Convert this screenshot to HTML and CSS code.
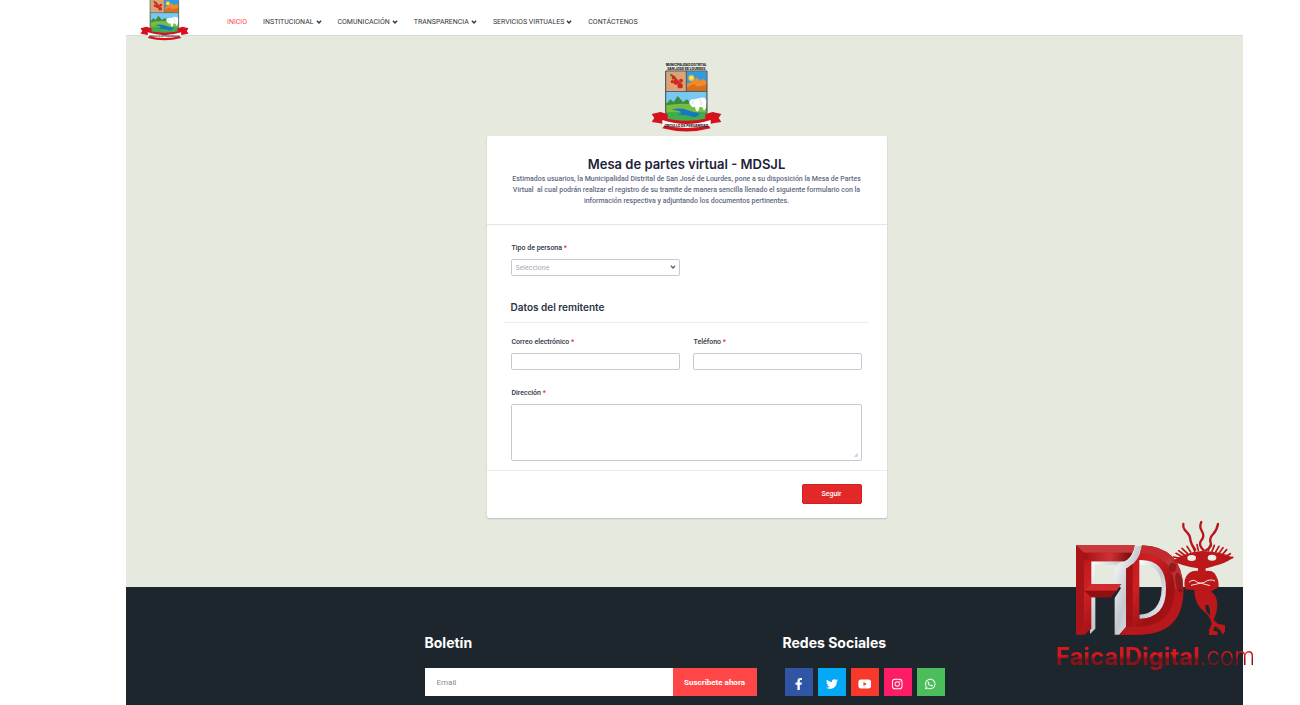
FILE: index.html
```html
<!DOCTYPE html>
<html lang="es">
<head>
<meta charset="utf-8">
<meta name="viewport" content="width=device-width, initial-scale=1">
<title>Mesa de partes virtual - MDSJL</title>
<link rel="stylesheet" href="styles.css">
</head>
<body>
<svg class="sprite" aria-hidden="true">
  <symbol id="caret" viewBox="0 0 10 10"><path d="M1.500 3L5 6.500 8.500 3" fill="none" stroke="currentColor" stroke-width="2.400"/></symbol>
</svg>

<div class="site">
  <header class="topbar">
    <a class="brand" href="#" aria-label="Inicio"><svg class="brand-crest" viewBox="0 0 213 210"><use href="#crest"/></svg></a>
    <nav class="menu">
      <a class="menu-link active" href="#">INICIO</a>
      <a class="menu-link" href="#">INSTITUCIONAL<svg class="caret"><use href="#caret"/></svg></a>
      <a class="menu-link" href="#">COMUNICACIÓN<svg class="caret"><use href="#caret"/></svg></a>
      <a class="menu-link" href="#">TRANSPARENCIA<svg class="caret"><use href="#caret"/></svg></a>
      <a class="menu-link" href="#">SERVICIOS VIRTUALES<svg class="caret"><use href="#caret"/></svg></a>
      <a class="menu-link" href="#">CONTÁCTENOS</a>
    </nav>
  </header>

  <main class="content">
    <svg class="crest" viewBox="0 0 213 210" role="img" aria-label="Municipalidad Distrital San José de Lourdes">
      <g id="crest">
        <path d="M43 27H169V150Q169 173 150 177L106 193L62 177Q43 173 43 150Z" fill="#fff"/>
        <path d="M45 28H105V86H45Z" fill="#dca474"/>
        <path d="M108 28H167V86H108Z" fill="#2f9be0"/>
        <path d="M108 66L124 58 138 46 148 56 158 50 167 60V86H108Z" fill="#f08a2c"/>
        <path d="M108 76L128 66 140 74 167 68V86H108Z" fill="#d96f1c"/>
        <circle cx="121" cy="48" r="9" fill="#ffc629"/>
        <circle cx="121" cy="48" r="4" fill="#fff0a0"/>
        <path d="M58 38Q70 42 94 76" stroke="#3c7b32" stroke-width="6" fill="none"/>
        <g fill="#d7261e"><circle cx="68" cy="47" r="6"/><circle cx="75" cy="60" r="8"/><circle cx="90" cy="56" r="6"/><circle cx="87" cy="71" r="8"/><circle cx="64" cy="59" r="5"/></g>
        <path d="M45 90H167V150Q167 170 150 175L106 190L62 175Q45 170 45 150Z" fill="#41ad49"/>
        <path d="M45 90H167V122H45Z" fill="#79c9ee"/>
        <path d="M45 128L58 112 68 120 80 102 96 120 108 112 124 128V140H45Z" fill="#3d8b3f"/>
        <path d="M45 130Q90 120 167 130V150H45Z" fill="#77bd43"/>
        <path d="M62 143Q88 136 106 143T146 154Q144 164 128 166Q112 157 78 158Q108 148 62 143Z" fill="#1976c5"/>
        <path d="M114 122Q118 109 131 112L150 107Q164 103 167 118L165 138 159 146 154 136 146 134 142 148 135 148 132 134Q124 138 120 131Z" fill="#fff"/>
        <path d="M131 113Q124 118 124 127M145 110Q152 117 151 130" stroke="#b9cdd3" stroke-width="2" fill="none"/>
        <path d="M44 27H168V150Q168 172 150 176L106 191L62 176Q44 172 44 150ZM106 27V88M44 88H168" fill="none" stroke="#3c4148" stroke-width="3"/>
        <path d="M2 156L28 150 50 156V182L28 184 2 180 10 168ZM211 156L185 150 163 156V182L185 184 211 180 203 168Z" fill="#d3121d"/>
        <path d="M28 164Q106 188 185 164V184L171 188 179 199Q106 218 34 199L42 188 28 184Z" fill="#d3121d"/>
        <path d="M34 174Q106 198 179 174V190Q106 206 34 190Z" fill="#fff"/>
        <g font-family="Inter, sans-serif" font-weight="800" text-anchor="middle" fill="#1b1b1b">
          <text x="106" y="13" font-size="9">MUNICIPALIDAD DISTRITAL</text>
          <text x="106" y="24" font-size="10">SAN JOSÉ DE LOURDES</text>
          <text x="106" y="196" font-size="10">ORGULLO DE PERUANIDAD</text>
        </g>
      </g>
    </svg>
    <form class="card">
      <div class="card-head">
        <h1 class="card-title">Mesa de partes virtual - MDSJL</h1>
        <p class="card-text">Estimados usuarios, la Municipalidad Distrital de San José de Lourdes, pone a su disposición la Mesa de Partes Virtual&nbsp; al cual podrán realizar el registro de su tramite de manera sencilla llenado el siguiente formulario con la información respectiva y adjuntando los documentos pertinentes.</p>
      </div>
      <div class="card-body">
        <div class="fields">
          <div class="field">
            <label class="label" for="tipo">Tipo de persona <span class="req">*</span></label>
            <div class="select-wrap">
              <select class="control select" id="tipo"><option>Seleccione</option></select>
              <svg class="select-caret"><use href="#caret"/></svg>
            </div>
          </div>
        </div>
        <h2 class="section-title">Datos del remitente</h2>
        <div class="fields">
          <div class="field">
            <label class="label" for="correo">Correo electrónico <span class="req">*</span></label>
            <input class="control" id="correo" type="email">
          </div>
          <div class="field">
            <label class="label" for="telefono">Teléfono <span class="req">*</span></label>
            <input class="control" id="telefono" type="tel">
          </div>
          <div class="field wide">
            <label class="label" for="direccion">Dirección <span class="req">*</span></label>
            <textarea class="control area" id="direccion"></textarea>
          </div>
        </div>
      </div>
      <div class="card-foot"><button class="submit" type="button">Seguir</button></div>
    </form>
  </main>

  <footer class="footer">
    <section class="newsletter">
      <h2 class="footer-title">Boletín</h2>
      <form class="subscribe">
        <input class="subscribe-input" type="email" placeholder="Email" aria-label="Email">
        <button class="subscribe-button" type="button">Suscribete ahora</button>
      </form>
    </section>
    <section>
      <h2 class="footer-title">Redes Sociales</h2>
      <div class="social">
        <a class="social-link facebook" href="#" aria-label="Facebook"><svg viewBox="0 0 320 512"><path d="M279.140 288l14.220-92.660h-88.910v-60.130c0-25.350 12.420-50.060 52.240-50.060h40.420V6.260S260.430 0 225.360 0c-73.220 0-121.080 44.380-121.080 124.720v70.620H22.890V288h81.390v224h100.170V288z"/></svg></a>
        <a class="social-link twitter" href="#" aria-label="Twitter"><svg viewBox="0 0 512 512"><path d="M459.370 151.716c.325 4.548.325 9.097.325 13.645 0 138.720-105.583 298.558-298.558 298.558-59.452 0-114.680-17.219-161.137-47.106 8.447.974 16.568 1.299 25.340 1.299 49.055 0 94.213-16.568 130.274-44.832-46.132-.975-84.792-31.188-98.112-72.772 6.498.974 12.995 1.624 19.818 1.624 9.421 0 18.843-1.300 27.614-3.573-48.081-9.747-84.143-51.980-84.143-102.985v-1.299c13.969 7.797 30.214 12.670 47.431 13.319-28.264-18.843-46.781-51.005-46.781-87.391 0-19.492 5.197-37.360 14.294-52.954 51.655 63.675 129.300 105.258 216.365 109.807-1.624-7.797-2.599-15.918-2.599-24.040 0-57.828 46.782-104.934 104.934-104.934 30.213 0 57.502 12.670 76.670 33.137 23.715-4.548 46.456-13.320 66.599-25.340-7.798 24.366-24.366 44.833-46.132 57.827 21.117-2.273 41.584-8.122 60.426-16.243-14.292 20.791-32.161 39.308-52.628 54.253z"/></svg></a>
        <a class="social-link youtube" href="#" aria-label="YouTube"><svg viewBox="0 0 576 512"><path d="M549.655 124.083c-6.281-23.650-24.787-42.276-48.284-48.597C458.781 64 288 64 288 64S117.220 64 74.629 75.486c-23.497 6.322-42.003 24.947-48.284 48.597-11.412 42.867-11.412 132.305-11.412 132.305s0 89.438 11.412 132.305c6.281 23.650 24.787 41.500 48.284 47.821C117.220 448 288 448 288 448s170.780 0 213.371-11.486c23.497-6.321 42.003-24.171 48.284-47.821 11.412-42.867 11.412-132.305 11.412-132.305s0-89.438-11.412-132.305zm-317.510 213.508V175.185l142.739 81.205-142.739 81.201z"/></svg></a>
        <a class="social-link instagram" href="#" aria-label="Instagram"><svg viewBox="0 0 448 512"><path d="M224 141c-63.600 0-115 51.300-115 115s51.400 115 115 115 115-51.300 115-115-51.400-115-115-115zm0 190c-41 0-75-33-75-75s34-75 75-75 75 34 75 75-34 75-75 75z"/><circle cx="343" cy="136" r="27"/><path fill-rule="evenodd" d="M132 32H316Q448 32 448 164V348Q448 480 316 480H132Q0 480 0 348V164Q0 32 132 32ZM132 73Q40 73 40 164V348Q40 439 132 439H316Q408 439 408 348V164Q408 73 316 73Z"/></svg></a>
        <a class="social-link whatsapp" href="#" aria-label="WhatsApp"><svg viewBox="0 0 448 512"><path d="M380.900 97.100C339 55.100 283.200 32 223.900 32c-122.400 0-222 99.600-222 222 0 39.100 10.200 77.300 29.600 111L0 480l117.700-30.900c32.400 17.700 68.900 27 106.100 27h.1c122.300 0 224.100-99.600 224.100-222 0-59.300-25.200-115-67.100-157zm-157 341.600c-33.200 0-65.700-8.900-94-25.700l-6.700-4-69.800 18.300L72 359.200l-4.400-7c-18.500-29.400-28.200-63.300-28.200-98.200 0-101.700 82.800-184.500 184.600-184.500 49.300 0 95.600 19.200 130.400 54.100 34.800 34.900 56.200 81.200 56.100 130.500 0 101.800-84.900 184.600-186.600 184.600zm101.200-138.200c-5.500-2.800-32.800-16.200-37.900-18-5.100-1.900-8.800-2.800-12.500 2.800-3.700 5.600-14.300 18-17.600 21.800-3.200 3.700-6.500 4.200-12 1.400-32.600-16.300-54-29.100-75.500-66-5.700-9.800 5.700-9.100 16.300-30.300 1.800-3.700.9-6.900-.5-9.700-1.400-2.800-12.500-30.100-17.100-41.200-4.500-10.800-9.100-9.300-12.500-9.500-3.200-.2-6.900-.2-10.600-.2-3.700 0-9.700 1.400-14.800 6.900-5.100 5.600-19.400 19-19.400 46.300 0 27.300 19.900 53.700 22.600 57.400 2.800 3.700 39.100 59.700 94.800 83.800 35.200 15.200 49 16.500 66.600 13.900 10.700-1.600 32.800-13.400 37.400-26.400 4.600-13 4.600-24.100 3.200-26.400-1.300-2.500-5-3.900-10.500-6.600z"/></svg></a>
      </div>
    </section>
  </footer>
</div>

<div class="watermark">
  <svg class="watermark-art" viewBox="18 30 591 375" aria-hidden="true">
    <defs>
      <linearGradient id="red" x1="0" y1="0" x2="1" y2="1"><stop offset="0" stop-color="#b3161a"/><stop offset=".35" stop-color="#cf2023"/><stop offset=".65" stop-color="#9c1013"/><stop offset="1" stop-color="#bd171b"/></linearGradient>
      <linearGradient id="bar" x1="0" y1="0" x2="1" y2="0"><stop offset="0" stop-color="#a31216"/><stop offset=".55" stop-color="#cf3133"/><stop offset="1" stop-color="#6f0b0e"/></linearGradient>
      <linearGradient id="silver" x1="0" y1="0" x2="1" y2="1"><stop offset="0" stop-color="#fff"/><stop offset=".5" stop-color="#c3c8cf"/><stop offset="1" stop-color="#f5f7f9"/></linearGradient>
    </defs>
    <g transform="translate(60 84)">
      <path d="M60 66H160L140 80H74V139H60ZM60 176H76V272L60 288Z" fill="url(#silver)"/>
      <path d="M196 24H216Q212 66 168 90V268L148 290H134V180L152 152V137H134V96Q136 80 162 74Q190 62 196 24Z" fill="url(#silver)"/>
      <path d="M208 64Q290 66 292 152T208 244V230Q272 226 275 152T208 80Z" fill="url(#silver)"/>
      <path d="M18 22H194Q190 56 163 70H64V138H154L122 178H64V272L44 290H18Z" fill="url(#red)"/>
      <path d="M18 22H194L186 44H42Z" fill="#c9393b"/>
      <path d="M42 44H186Q180 62 163 70H64L42 66Z" fill="url(#bar)"/>
      <path d="M42 158L64 138H154L140 158Z" fill="#d12b2e"/>
      <path d="M42 158H140L122 178H64Z" fill="#8f0f13"/>
      <path d="M18 22L42 44V268L18 290Z" fill="#a91418"/>
      <path fill-rule="evenodd" d="M216 22Q338 26 340 154T210 290H148L168 268V92Q210 70 216 22ZM208 66V242Q288 240 288 152T208 66Z" fill="url(#red)"/>
      <path d="M216 22Q338 26 340 154H314Q312 50 210 46Z" fill="#c22c2f"/>
      <path d="M340 154Q340 288 210 290H148L168 266H212Q312 260 314 154Z" fill="#b8171b"/>
      <path d="M168 92L188 78V266H168Z" fill="#a31216"/>
      <g fill="#7d1417" opacity=".7"><ellipse cx="308" cy="88" rx="11" ry="14"/><ellipse cx="327" cy="134" rx="10" ry="31" transform="rotate(-10 327 134)"/></g>
      <path d="M298 78L290 69M304 75L296 61M311 74L306 60" stroke="#a84a48" stroke-width="4"/>
    </g>
    <g transform="translate(345 15)">
      <path fill="#bb181c" fill-rule="evenodd" d="M22 138Q60 112 110 108Q165 108 205 128Q178 146 150 152Q130 158 122 160V168Q140 166 148 174Q162 192 161 216Q145 225 138 230Q156 240 157 270Q156 295 146 314L158 326 180 331V350L172 359Q170 345 150 334L144 346 158 351V360H132V345L140 328Q138 305 118 290Q88 268 88 225L60 223Q53 190 72 174Q84 166 99 168V160Q50 153 22 138ZM122 270Q136 264 135 302Q119 288 122 270Z"/>
      <g fill="#eceee5"><ellipse cx="80" cy="129" rx="13" ry="9"/><ellipse cx="141" cy="128" rx="13" ry="9"/></g>
      <path d="M72 202Q84 190 98 202L135 212M150 198Q135 190 118 202L78 211" stroke="#f0e4df" stroke-width="3" fill="none"/>
    </g>
    <g fill="none" stroke="#b9151b" stroke-linecap="round">
      <path stroke-width="7" d="M400 42Q398 55 409 65T421 88T436 119M454 36Q447 50 456 64T454 91T461 121M504 42Q501 60 489 73T482 98T468 121"/>
      <path stroke-width="5" d="M394 146L371 141M397 140L378 130M403 135L386 122M412 130L396 115M422 126L411 109M434 124L427 106M445 121L441 104M475 122L480 106M486 124L493 106M497 126L507 109M507 130L519 113M515 136L530 119M524 141L541 131M528 147L548 142"/>
    </g>
  </svg>
  <div class="watermark-name"><strong>FaicalDigital</strong><span>.com</span></div>
</div>
</body>
</html>
```
FILE: styles.css
```css
* { box-sizing: border-box; }

body {
  margin: 0;
  position: relative;
  background: #fff;
  font-family: Roboto, sans-serif;
  font-size: 7px;
  color: #2c3345;
}

h1, h2, p { margin: 0; }
h1, h2 { font-family: Inter, sans-serif; }
a { text-decoration: none; }
button, input, select, textarea { font: inherit; margin: 0; }

.sprite { position: absolute; width: 0; height: 0; }

.site {
  display: flex;
  flex-direction: column;
  min-height: 100vh;
  margin: 0 57px 0 126px;
}

/* Top bar */
.topbar {
  position: relative;
  display: flex;
  align-items: center;
  min-height: 36px;
  padding: 8px 14px 0 101px;
  border-bottom: 1px solid #d9dcd4;
}
.brand { position: absolute; left: 14px; bottom: -6px; }
.brand-crest { display: block; width: 49px; height: 49px; }
.menu {
  display: flex;
  flex-wrap: wrap;
  gap: 16px;
  line-height: 10px;
}
.menu-link { display: flex; align-items: center; gap: 2px; color: #33373d; }
.menu-link.active { color: #ff4444; }
.caret { width: 6px; height: 6px; }

/* Form page */
.content {
  flex: 1;
  display: flex;
  flex-direction: column;
  align-items: center;
  gap: 4px;
  padding: 26px 0 69px 4px;
  background: #e5e9de;
}
.crest { width: 71px; height: 70px; }
.card {
  width: 100%;
  max-width: 400px;
  background: #fff;
  border-radius: 2px;
  box-shadow: 0 1px 2px #b9beb8;
}
.card-head {
  padding: 19px 24px 17px;
  border-bottom: 1px solid #e3e5e9;
  text-align: center;
}
.card-title { font-size: 13px; line-height: 19px; font-weight: 600; color: #1b2238; }
.card-text { line-height: 11px; font-weight: 500; color: #606982; }
.card-body { padding: 18px 25px 9px 24px; }
.fields { display: grid; grid-template-columns: 1fr 1fr; gap: 18px 13px; }
.field { display: flex; flex-direction: column; gap: 6px; }
.field.wide { grid-column: 1 / -1; }
.label { padding-left: 1px; line-height: 10px; font-weight: 500; }
.req { color: #e22828; }
.control {
  display: block;
  width: 100%;
  height: 17px;
  padding: 0 4px;
  border: 1px solid #c6c9d6;
  border-radius: 2px;
  background: #fff;
  color: #2c3345;
  outline: none;
}
.select-wrap { position: relative; }
.select { appearance: none; color: #a4a9b8; }
.select-caret { position: absolute; right: 4px; top: 5px; width: 6px; height: 6px; color: #5b6278; pointer-events: none; }
.area { height: 57px; resize: vertical; }
.area::-webkit-resizer {
  background: linear-gradient(135deg, transparent 50%, #d5d8e1 50%) 8px 8px / 4px 4px no-repeat;
}
.section-title {
  margin: 23px -7px 14px;
  padding: 0 7px 7px;
  border-bottom: 1px solid #ededf1;
  font-size: 10px;
  line-height: 16px;
  font-weight: 600;
}
.card-foot {
  display: flex;
  justify-content: flex-end;
  padding: 13px 25px 14px;
  border-top: 1px solid #ececf0;
}
.submit {
  width: 60px;
  height: 20px;
  padding: 0;
  border: 1px solid #d71d1d;
  border-radius: 2px;
  background: #e22828;
  color: #fff;
  font-weight: 500;
}

/* Footer */
.footer {
  display: flex;
  flex-wrap: wrap;
  justify-content: center;
  gap: 26px;
  padding: 47px 0 9px;
  background: #1e262d;
}
.newsletter { width: 332px; }
.footer-title { margin-bottom: 16px; font-size: 14px; line-height: 18px; font-weight: 700; color: #fff; }
.subscribe { display: flex; font-size: 8px; }
.subscribe-input { flex: 1; min-width: 0; height: 28px; padding: 0 12px; border: 0; background: #fff; outline: none; }
.subscribe-input::placeholder { color: #868c93; }
.subscribe-button { width: 84px; padding: 0; border: 0; background: #ff4747; color: #fff; font-weight: 700; }
.social { display: flex; gap: 5px; padding-left: 2px; }
.social-link { display: flex; align-items: center; justify-content: center; width: 28px; height: 28px; padding-top: 4px; }
.social-link svg { height: 12px; fill: #fff; }
.facebook { background: #2f55a4; }
.twitter { background: #03a9f4; }
.youtube { background: #f6392b; }
.instagram { background: #fd1d66; }
.whatsapp { background: #4bbe5b; }

/* Author signature over the page corner */
.watermark { position: absolute; right: 47px; bottom: 34px; width: 197px; }
.watermark-art { display: block; width: 100%; }
.watermark-name {
  font-family: Inter, sans-serif;
  font-size: 24px;
  line-height: 28px;
  margin-top: -2px;
  white-space: nowrap;
  color: transparent;
  background: linear-gradient(#d5181e 45%, #7d1118 60%, #a8151b);
  background-clip: text;
}
.watermark-name strong { font-weight: 700; }
.watermark-name span { font-weight: 300; }
```
